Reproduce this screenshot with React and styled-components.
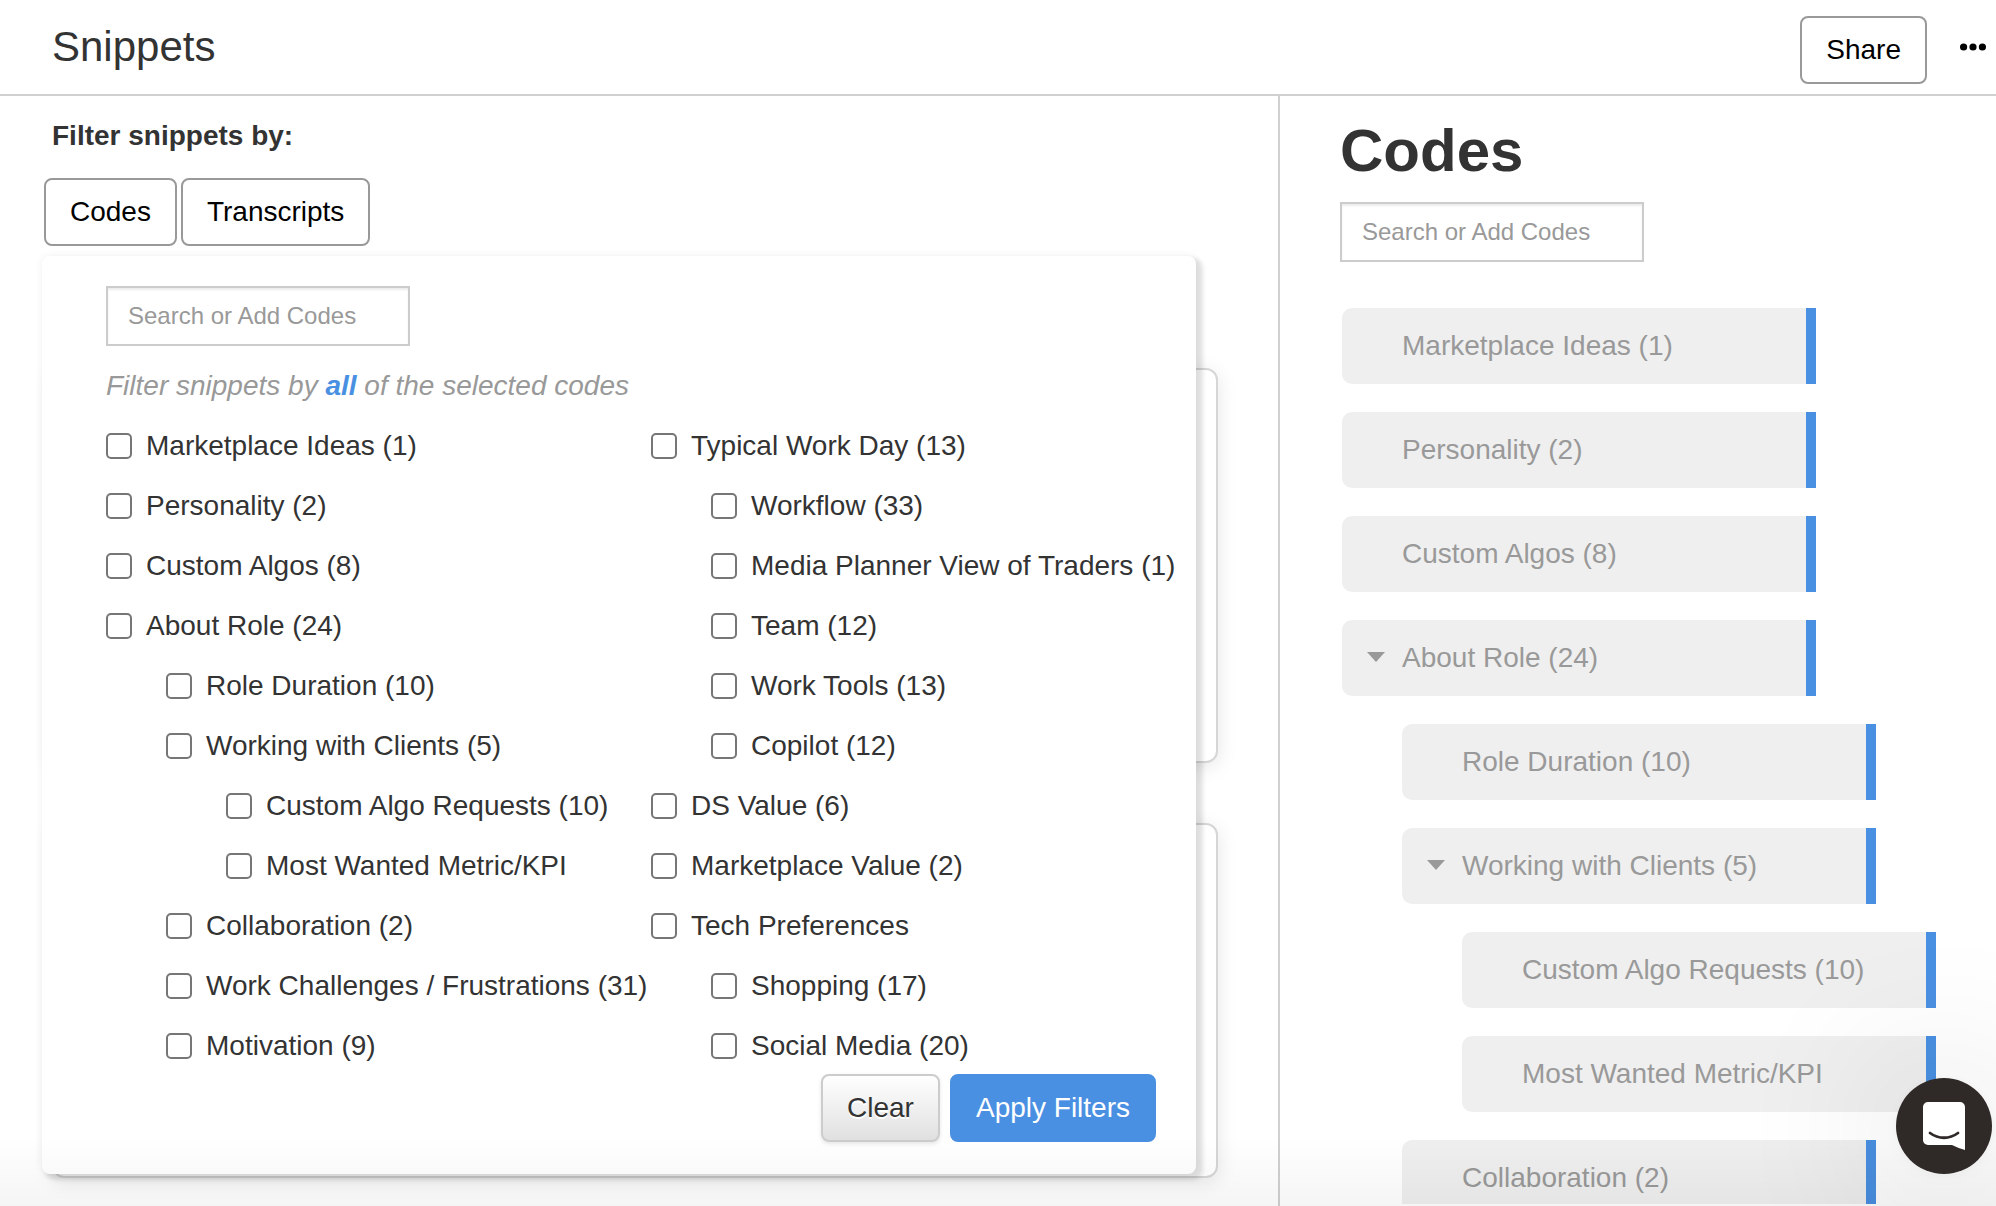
import React from 'react';
import styled, { createGlobalStyle } from 'styled-components';

const GlobalStyle = createGlobalStyle`
  *, *::before, *::after { box-sizing: border-box; }
  html, body, #root { height: 100%; }
  body {
    margin: 0;
    overflow: hidden;
    background: #fff;
    color: #333;
    font-family: "Helvetica Neue", Helvetica, "Liberation Sans", Arial, sans-serif;
    font-size: 28px;
    line-height: 40px;
  }
  button, input { font: inherit; }
`;

const Page = styled.div`
  display: flex;
  flex-direction: column;
  height: 100vh;
`;

const Header = styled.header`
  display: flex;
  align-items: flex-start;
  flex: none;
  height: 96px;
  padding: 16px 8px 0 52px;
  border-bottom: 2px solid #d0d0d0;
`;

const Title = styled.h1`
  flex: 1;
  margin: 0;
  font-size: 42px;
  font-weight: 400;
  line-height: 62px;
`;

const Button = styled.button`
  height: 68px;
  padding: 0 24px;
  border: 2px solid #999;
  border-radius: 8px;
  background: #fff;
  color: #000;
  white-space: nowrap;
  cursor: pointer;
`;

const ClearButton = styled(Button)`
  border-color: #ccc;
  background: linear-gradient(#fff, #e0e0e0);
  color: #333;
  text-shadow: 0 2px 0 #fff;
  box-shadow: 0 2px 4px rgba(0, 0, 0, 0.1);
`;

const ApplyButton = styled(Button)`
  border-color: #4a90e2;
  background: #4a90e2;
  color: #fff;
`;

const MoreButton = styled.button`
  display: flex;
  align-items: center;
  justify-content: center;
  width: 30px;
  height: 62px;
  margin-left: 31px;
  padding: 0;
  border: 0;
  background: none;
  cursor: pointer;
`;

const Body = styled.div`
  display: flex;
  flex: 1;
  min-height: 0;
`;

const Main = styled.main`
  position: relative;
  flex: 1;
  min-width: 0;
  padding: 20px 60px 0 44px;
  overflow: hidden;
`;

const FilterLabel = styled.h2`
  margin: 0 0 22px;
  padding-left: 8px;
  font-size: 28px;
  line-height: 40px;
`;

const FilterTabs = styled.div`
  display: flex;
  gap: 4px;
`;

const SnippetCards = styled.div`
  display: grid;
  gap: 60px;
  margin-top: 122px;
  padding-left: 8px;
`;

const SnippetCard = styled.article`
  height: ${(p) => p.$height}px;
  border: 2px solid #d6d6d6;
  border-radius: 12px;
  background: #fff;
  box-shadow: 0 4px 20px rgba(0, 0, 0, 0.1);
`;

const FilterPanel = styled.form`
  position: absolute;
  top: 160px;
  left: 42px;
  right: 82px;
  padding: 30px 0 32px 64px;
  border-radius: 8px;
  background: #fff;
  box-shadow: 5px 4px 4px 2px rgba(0, 0, 0, 0.11), 0 0 8px rgba(0, 0, 0, 0.06);
`;

const SearchInput = styled.input`
  display: block;
  flex: none;
  width: 304px;
  height: 60px;
  padding: 0 20px;
  border: 2px solid #ccc;
  border-radius: 0;
  background: #fff;
  box-shadow: inset 0 2px 2px rgba(0, 0, 0, 0.075);
  color: #333;
  font-size: 24px;
  outline: none;
  &::placeholder { color: #999; opacity: 1; }
`;

const Hint = styled.p`
  margin: 20px 0;
  color: #999;
  font-style: italic;
`;

const HintMode = styled.a`
  color: #4a90e2;
  font-weight: 700;
  text-decoration: none;
`;

const Columns = styled.div`
  display: grid;
  grid-template-columns: 1fr 1fr;
`;

const CheckList = styled.ul`
  display: flex;
  flex-direction: column;
  gap: 20px;
  min-width: 0;
  margin: 0;
  padding: 0;
  list-style: none;
`;

const CheckRow = styled.li`
  padding-left: ${(p) => p.$level * 60}px;
`;

const CheckLabel = styled.label`
  display: flex;
  align-items: center;
  gap: 14px;
  white-space: nowrap;
`;

const Checkbox = styled.input`
  appearance: none;
  flex: none;
  width: 26px;
  height: 26px;
  margin: 0;
  border: 2px solid #767676;
  border-radius: 5px;
  background: #fff;
  &:checked { background: #4a90e2; border-color: #4a90e2; }
`;

const Actions = styled.div`
  display: flex;
  justify-content: flex-end;
  gap: 10px;
  margin-top: 8px;
  padding-right: 40px;
`;

const Sidebar = styled.aside`
  display: flex;
  flex-direction: column;
  flex: none;
  width: 718px;
  padding: 20px 0 2px 60px;
  border-left: 2px solid #d0d0d0;
  overflow: hidden;
`;

const SidebarTitle = styled.h2`
  margin: 0 0 16px;
  font-size: 60px;
  line-height: 70px;
`;

const CodeList = styled.ul`
  display: flex;
  flex: 1;
  flex-direction: column;
  gap: 28px;
  min-height: 0;
  margin: 46px 0 0;
  padding: 0 0 0 2px;
  overflow: hidden;
  list-style: none;
`;

const CodeItem = styled.li`
  display: flex;
  align-items: center;
  flex: none;
  width: 474px;
  height: 76px;
  margin-left: ${(p) => p.$level * 60}px;
  border-right: 10px solid #4a90e2;
  border-radius: 10px 0 0 10px;
  background: #efefef;
  color: #999;
  white-space: nowrap;
`;

const CaretSlot = styled.span`
  display: flex;
  align-items: center;
  flex: none;
  width: 60px;
  padding-left: 25px;
`;

const BottomFade = styled.div`
  position: fixed;
  left: 0;
  right: 0;
  bottom: 0;
  height: 70px;
  background: linear-gradient(rgba(0, 0, 0, 0), rgba(0, 0, 0, 0.04));
  pointer-events: none;
`;

const ChatButton = styled.button`
  position: fixed;
  right: 4px;
  bottom: 32px;
  display: flex;
  align-items: center;
  justify-content: center;
  width: 96px;
  height: 96px;
  padding: 0;
  border: 0;
  border-radius: 50%;
  background: #2f2927;
  box-shadow: 0 2px 12px rgba(0, 0, 0, 0.04), 0 4px 160px 20px rgba(0, 0, 0, 0.12);
  cursor: pointer;
`;

const leftCodes = [
  ['Marketplace Ideas (1)', 0],
  ['Personality (2)', 0],
  ['Custom Algos (8)', 0],
  ['About Role (24)', 0],
  ['Role Duration (10)', 1],
  ['Working with Clients (5)', 1],
  ['Custom Algo Requests (10)', 2],
  ['Most Wanted Metric/KPI', 2],
  ['Collaboration (2)', 1],
  ['Work Challenges / Frustrations (31)', 1],
  ['Motivation (9)', 1],
];

const rightCodes = [
  ['Typical Work Day (13)', 0],
  ['Workflow (33)', 1],
  ['Media Planner View of Traders (1)', 1],
  ['Team (12)', 1],
  ['Work Tools (13)', 1],
  ['Copilot (12)', 1],
  ['DS Value (6)', 0],
  ['Marketplace Value (2)', 0],
  ['Tech Preferences', 0],
  ['Shopping (17)', 1],
  ['Social Media (20)', 1],
];

const expandable = ['About Role (24)', 'Working with Clients (5)'];

function CodeChecks({ codes }) {
  return (
    <CheckList>
      {codes.map(([name, level]) => (
        <CheckRow key={name} $level={level}>
          <CheckLabel>
            <Checkbox type="checkbox" />
            {name}
          </CheckLabel>
        </CheckRow>
      ))}
    </CheckList>
  );
}

export default function App() {
  return (
    <Page>
      <GlobalStyle />
      <Header>
        <Title>Snippets</Title>
        <Button type="button">Share</Button>
        <MoreButton type="button" aria-label="More options">
          <svg width="26" height="8" viewBox="0 0 26 8" fill="#000">
            <circle cx="3.6" cy="4" r="3.6" />
            <circle cx="13" cy="4" r="3.6" />
            <circle cx="22.4" cy="4" r="3.6" />
          </svg>
        </MoreButton>
      </Header>
      <Body>
        <Main>
          <FilterLabel>Filter snippets by:</FilterLabel>
          <FilterTabs>
            <Button type="button">Codes</Button>
            <Button type="button">Transcripts</Button>
          </FilterTabs>
          <SnippetCards>
            <SnippetCard $height={395} />
            <SnippetCard $height={355} />
          </SnippetCards>
          <FilterPanel onSubmit={(e) => e.preventDefault()}>
            <SearchInput type="text" aria-label="Search codes to filter" placeholder="Search or Add Codes" />
            <Hint>
              Filter snippets by <HintMode href="#all">all</HintMode> of the selected codes
            </Hint>
            <Columns>
              <CodeChecks codes={leftCodes} />
              <CodeChecks codes={rightCodes} />
            </Columns>
            <Actions>
              <ClearButton type="reset">Clear</ClearButton>
              <ApplyButton type="submit">Apply Filters</ApplyButton>
            </Actions>
          </FilterPanel>
        </Main>
        <Sidebar>
          <SidebarTitle>Codes</SidebarTitle>
          <SearchInput type="text" aria-label="Search or add codes" placeholder="Search or Add Codes" />
          <CodeList>
            {leftCodes.slice(0, 9).map(([name, level]) => (
              <CodeItem key={name} $level={level}>
                <CaretSlot>
                  {expandable.includes(name) && (
                    <svg width="18" height="12" viewBox="0 0 18 12" fill="#999">
                      <path d="M0 0h18L9 10z" />
                    </svg>
                  )}
                </CaretSlot>
                {name}
              </CodeItem>
            ))}
          </CodeList>
        </Sidebar>
      </Body>
      <BottomFade />
      <ChatButton type="button" aria-label="Open chat">
        <svg width="42" height="48" viewBox="0 0 42 48">
          <path d="M5 0h32a5 5 0 0 1 5 5v43c-4-1-8.500-2.700-13-5H5a5 5 0 0 1-5-5V5a5 5 0 0 1 5-5z" fill="#fff" />
          <path d="M7 31c8.500 6.300 19.500 6.300 28 0" fill="none" stroke="#2f2927" strokeWidth="2.800" strokeLinecap="round" />
        </svg>
      </ChatButton>
    </Page>
  );
}
